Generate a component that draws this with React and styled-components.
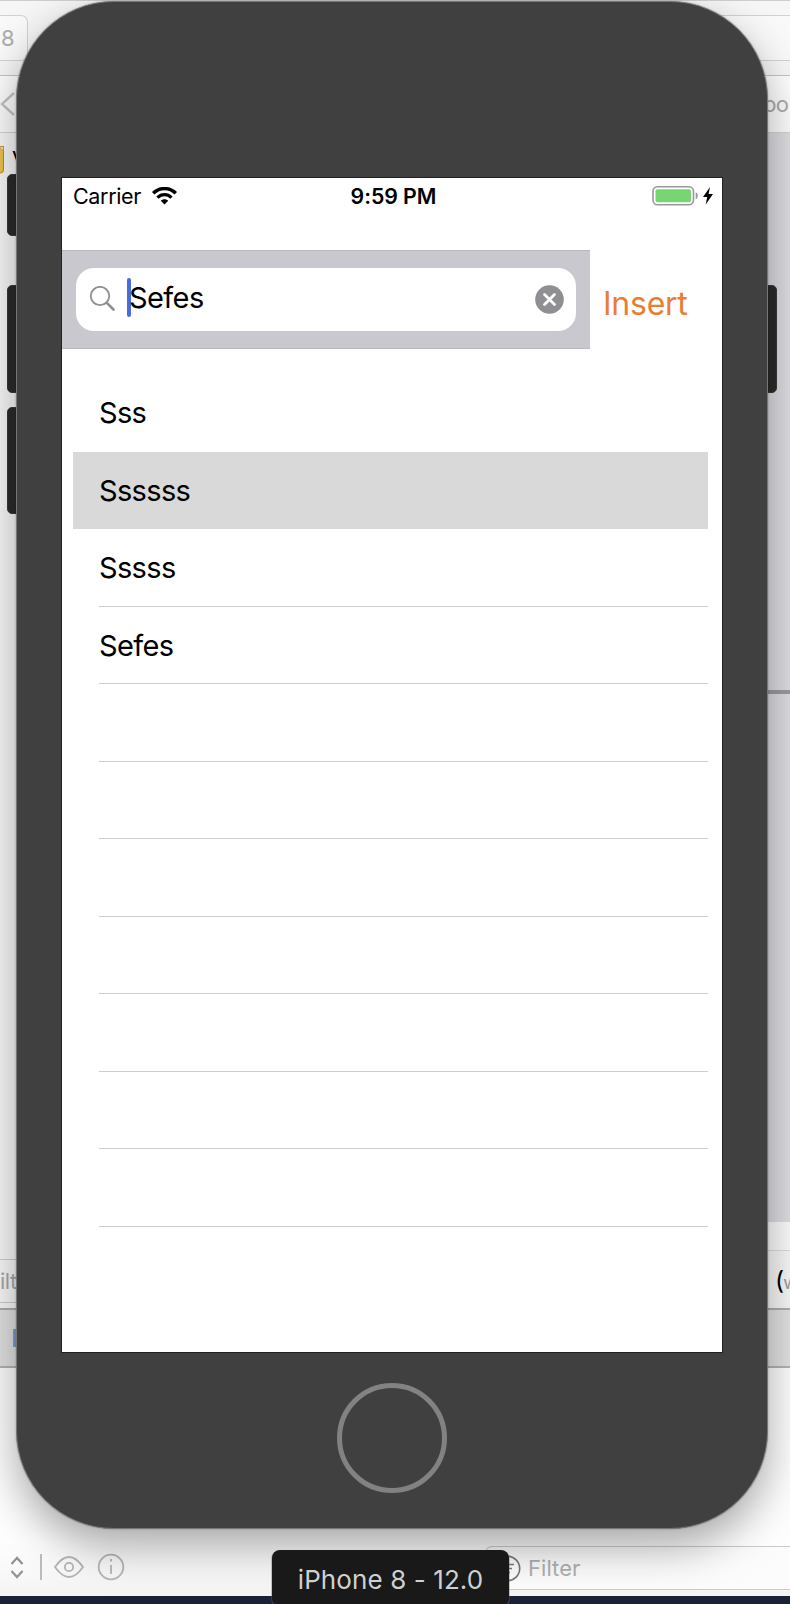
import React from "react";
import styled, { createGlobalStyle } from "styled-components";

const Global = createGlobalStyle`
  * { box-sizing: border-box; }
  body { margin: 0; font-family: Inter, "Liberation Sans", sans-serif; color: #000; }
`;

const Desktop = styled.div`
  position: relative;
  width: 790px;
  height: 1604px;
  overflow: hidden;
  display: flex;
  flex-direction: column;
  background: #1b2237;
`;

/* ---- editor window behind the simulator ---- */
const TopToolbar = styled.div`
  height: 76px;
  flex: none;
  display: flex;
  justify-content: space-between;
  padding-top: 14px;
  background: #f6f6f6;
  border-top: 1px solid #cfcfcf;
  border-bottom: 1px solid #c4c4c4;
`;
const ToolbarBox = styled.div`
  width: ${(p) => p.$w}px;
  height: 46px;
  border: 1px solid #d2d2d2;
  border-width: ${(p) => (p.$open ? "1px 0" : "1px 1px 1px 0")};
  border-radius: ${(p) => (p.$open ? 0 : "0 7px 7px 0")};
  padding-left: 1px;
  font-size: 22px;
  line-height: 45px;
  color: #adadad;
  background: #f9f9f9;
`;
const PathBar = styled.div`
  height: 57px;
  flex: none;
  display: flex;
  align-items: center;
  justify-content: space-between;
  background: #fdfdfd;
  border-bottom: 1px solid #d4d4d4;
`;
const PathText = styled.span`
  width: 27px;
  font-size: 22px;
  letter-spacing: -0.8px;
  color: #aaa;
`;
const Workspace = styled.div`
  height: 1175px;
  flex: none;
  display: flex;
  justify-content: space-between;
`;
const Navigator = styled.div`
  width: 60px;
  display: flex;
  flex-direction: column;
  background: #f9f9f9;
`;
const NavFiles = styled.div`
  height: 1126px;
  padding-top: 12px;
  display: flex;
  gap: 7px;
  font-size: 22px;
  line-height: 28px;
`;
const NavFilter = styled.div`
  height: 44px;
  border-top: 1px solid #cecece;
  border-bottom: 1px solid #cecece;
  background: #fafafa;
  font-size: 22px;
  line-height: 42px;
  letter-spacing: -0.5px;
  color: #a8a8a8;
`;
const CanvasColumn = styled.div`
  width: 60px;
  display: flex;
  flex-direction: column;
  align-items: stretch;
`;
const Canvas = styled.div`
  height: 1089px;
  padding-top: 557px;
  background: #dddde2;
`;
const CanvasRule = styled.div`
  height: 4px;
  background: #9c9c9c;
`;
const CanvasGap = styled.div`
  height: 28px;
  background: #fcfcfc;
`;
const SizeClassBar = styled.div`
  flex: 1;
  border-top: 1px solid #dedede;
  background: #f8f8f8;
  display: flex;
  align-items: center;
  padding-left: 45px;
  font-size: 25px;
  color: #000;
`;
const SizeClass = styled.span`
  font-size: 18px;
  color: #999;
  margin: 5px 0 0 -1px;
`;
const DebugBar = styled.div`
  height: 60px;
  flex: none;
  border-top: 2px solid #adadad;
  border-bottom: 2px solid #b4b4b4;
  background: #e2e2e2;
  padding: 19px 0 0 13px;
`;
const DebugFlag = styled.div`
  width: 10px;
  height: 18px;
  background: #7da0dc;
`;
const Console = styled.div`
  height: 174px;
  flex: none;
  background: #fefefe;
`;
const ConsoleBar = styled.div`
  height: 54px;
  flex: none;
  display: flex;
  justify-content: space-between;
  background: linear-gradient(#fefefe, #f4f4f4);
`;
const ConsoleTools = styled.div`
  padding-top: 1px;
  height: 50px;
  svg { display: block; }
`;
const ConsoleFilter = styled.div`
  width: 305px;
  height: 44px;
  margin-top: 4px;
  border: 1px solid #cbcbcb;
  border-right: 0;
  border-radius: 7px 0 0 7px;
  background: #fcfcfc;
  display: flex;
  align-items: center;
  gap: 7px;
  padding-left: 8px;
  font-size: 22px;
  letter-spacing: 0.05px;
  color: #b0b0b0;
`;

/* ---- simulator ---- */
const SideButton = styled.div`
  position: absolute;
  left: ${(p) => p.$x}px;
  top: ${(p) => p.$y}px;
  width: 17px;
  height: ${(p) => p.$h}px;
  border-radius: 5px;
  background: #2b2b2b;
  border: 1px solid #3a3a3a;
`;
const Device = styled.div`
  position: absolute;
  left: 16px;
  top: 1px;
  width: 752px;
  height: 1528px;
  border-radius: 98px;
  background: #404040;
  border: 1px solid #777;
  box-shadow: 0 0 2px rgba(0, 0, 0, 0.3), 0 18px 44px rgba(0, 0, 0, 0.34);
  padding: 176px 0 0 45px;
`;
const Screen = styled.div`
  width: 660px;
  height: 1174px;
  background: #fff;
  outline: 1px solid #222;
  display: flex;
  flex-direction: column;
`;
const StatusBar = styled.div`
  height: 36px;
  margin-bottom: 36px;
  padding: 0 7px 0 11px;
  display: grid;
  grid-template-columns: 1fr auto 1fr;
  align-items: center;
`;
const StatusLeft = styled.div`
  display: flex;
  align-items: center;
  gap: 11px;
  font-size: 21.5px;
  letter-spacing: -0.35px;
  svg { margin-bottom: 1px; }
`;
const Clock = styled.div`
  margin-left: -1px;
  font-size: 21.3px;
  font-weight: 600;
  letter-spacing: -0.05px;
`;
const StatusRight = styled.div`
  display: flex;
  justify-content: flex-end;
`;
const SearchRow = styled.div`
  display: flex;
  height: 99px;
`;
const SearchBar = styled.div`
  width: 528px;
  padding: 17px 14px;
  background: #c9c8ce;
  border-top: 1px solid #b9b8be;
  border-bottom: 1px solid #b9b8be;
`;
const SearchField = styled.div`
  height: 63px;
  border-radius: 18px;
  background: #fff;
  display: flex;
  align-items: center;
  padding: 0 12px 0 13px;
`;
const Caret = styled.div`
  width: 4px;
  height: 39px;
  margin: 0 0 4px 11px;
  border-radius: 2px;
  background: #4a6bdc;
`;
const Query = styled.span`
  flex: 1;
  margin-left: -2px;
  margin-top: -4px;
  font-size: 29px;
  letter-spacing: -0.6px;
`;
const InsertButton = styled.button`
  border: 0;
  background: none;
  padding: 7px 0 0 13px;
  font: 400 32px Inter, sans-serif;
  letter-spacing: -0.25px;
  color: #e97e32;
`;
const List = styled.div`
  margin: 25.4px 14px 0 11px;
`;
const Row = styled.div`
  height: 77.5px;
  padding-left: 26px;
  background: ${(p) => (p.$selected ? "#d9d9d9" : "transparent")};
`;
const RowLabel = styled.div`
  height: 100%;
  border-bottom: 1px solid ${(p) => (p.$line ? "#cdcdcf" : "transparent")};
  font-size: 29px;
  letter-spacing: -0.65px;
  line-height: 78px;
`;
const HomeButton = styled.div`
  width: 110px;
  height: 110px;
  margin: 31px 0 0 275px;
  border: 5.5px solid #828282;
  border-radius: 50%;
`;
const DeviceLabel = styled.div`
  position: absolute;
  left: 272px;
  top: 1550px;
  width: 237px;
  height: 56px;
  border-radius: 8px;
  background: #191919;
  color: #d0d0d0;
  font-size: 26px;
  line-height: 60px;
  text-align: center;
  letter-spacing: 0.1px;
  box-shadow: 0 1px 0 1px rgba(90, 98, 120, 0.35);
`;

const rows = ["Sss", "Ssssss", "Sssss", "Sefes", "", "", "", "", "", "", ""];

const Wifi = () => (
  <svg width="25" height="18" viewBox="0 0 25 18" fill="none" stroke="#000">
    <path d="M1.2 6.3C7.6 0 17.4 0 23.8 6.3" strokeWidth="3.5" />
    <path d="M5.5 10.6C9.6 6.7 15.4 6.7 19.5 10.6" strokeWidth="3.3" />
    <path d="M8.8 13.8C11 11.8 14 11.8 16.2 13.8L12.5 17.5Z" fill="#000" stroke="none" />
  </svg>
);
const Battery = () => (
  <svg width="63" height="22" viewBox="0 0 63 22">
    <rect x="1" y="1.7" width="40.5" height="18" rx="4.5" fill="none" stroke="#999" strokeWidth="1.6" />
    <rect x="3.5" y="4.2" width="35.5" height="13" rx="2" fill="#78d672" />
    <path d="M43.7 7.3c2.8 1 2.8 6 0 7z" fill="#999" />
    <path d="M58 2L51 12h4.2L53.7 19.5 61 9h-4.4z" fill="#000" />
  </svg>
);
const Magnifier = () => (
  <svg width="27" height="27" viewBox="0 0 27 27" fill="none" stroke="#8e8e93">
    <circle cx="11" cy="10" r="9.2" strokeWidth="1.8" />
    <path d="M17.8 16.8L24.5 23.5" strokeWidth="2.6" strokeLinecap="round" />
  </svg>
);
const Clear = () => (
  <svg width="29" height="29" viewBox="0 0 29 29">
    <circle cx="14.5" cy="14.5" r="14.3" fill="#8e8e93" />
    <path d="M9.5 9.5l10 10m0-10l-10 10" stroke="#fff" strokeWidth="2.8" strokeLinecap="round" />
  </svg>
);

export default function App() {
  return (
    <Desktop>
      <Global />
      <TopToolbar>
        <ToolbarBox $w={28}>8</ToolbarBox>
        <ToolbarBox $w={110} $open />
      </TopToolbar>
      <PathBar>
        <svg width="16" height="26" viewBox="0 0 16 26" fill="none" stroke="#c3c3c3" strokeWidth="2.4">
          <path d="M14 2L2 13l12 11" />
        </svg>
        <PathText>bo</PathText>
      </PathBar>
      <Workspace>
        <Navigator>
          <NavFiles>
            <svg width="5" height="30" viewBox="0 0 5 30">
              <path d="M-8 1.5H3.5V25q0 3-3 3H-8z" fill="#ebc44a" stroke="#b98c25" />
              <path d="M-1 1.5h4.5v5z" fill="#f8e7b4" stroke="#b98c25" strokeWidth=".7" />
            </svg>
            <span>V</span>
          </NavFiles>
          <NavFilter>ilter</NavFilter>
        </Navigator>
        <CanvasColumn>
          <Canvas><CanvasRule /></Canvas>
          <CanvasGap />
          <SizeClassBar>(<SizeClass>w</SizeClass></SizeClassBar>
        </CanvasColumn>
      </Workspace>
      <DebugBar><DebugFlag /></DebugBar>
      <Console />
      <ConsoleBar>
        <ConsoleTools>
          <svg width="130" height="50" viewBox="0 0 130 50" fill="none" stroke="#b5b5b5" strokeWidth="1.8">
            <path d="M11.5 21l5.5-6 5.5 6M11.5 28l5.5 6 5.5-6" stroke="#929292" strokeWidth="2.2" />
            <path d="M41 11v26" />
            <path d="M55 24q14-20 28 0q-14 20-28 0z" />
            <circle cx="69" cy="24" r="4.2" />
            <circle cx="111" cy="24" r="12.3" />
            <path d="M111 22v9M111 16v2.5" />
          </svg>
        </ConsoleTools>
        <ConsoleFilter>
          <svg width="27" height="27" viewBox="0 0 27 27" fill="none" stroke="#777" strokeWidth="1.6">
            <circle cx="13.5" cy="13.5" r="12.2" />
            <path d="M7 9.5h13M9 13.5h9M11 17.5h5" />
          </svg>
          Filter
        </ConsoleFilter>
      </ConsoleBar>

      <SideButton $x={7} $y={174} $h={62} />
      <SideButton $x={7} $y={285} $h={108} />
      <SideButton $x={7} $y={407} $h={107} />
      <SideButton $x={760} $y={285} $h={108} />
      <Device>
        <Screen>
          <StatusBar>
            <StatusLeft>Carrier <Wifi /></StatusLeft>
            <Clock>9:59 PM</Clock>
            <StatusRight><Battery /></StatusRight>
          </StatusBar>
          <SearchRow>
            <SearchBar>
              <SearchField>
                <Magnifier />
                <Caret />
                <Query>Sefes</Query>
                <Clear />
              </SearchField>
            </SearchBar>
            <InsertButton>Insert</InsertButton>
          </SearchRow>
          <List>
            {rows.map((label, i) => (
              <Row key={i} $selected={i === 1}>
                <RowLabel $line={i > 1}>{label}</RowLabel>
              </Row>
            ))}
          </List>
        </Screen>
        <HomeButton />
      </Device>
      <DeviceLabel>iPhone 8 - 12.0</DeviceLabel>
    </Desktop>
  );
}
